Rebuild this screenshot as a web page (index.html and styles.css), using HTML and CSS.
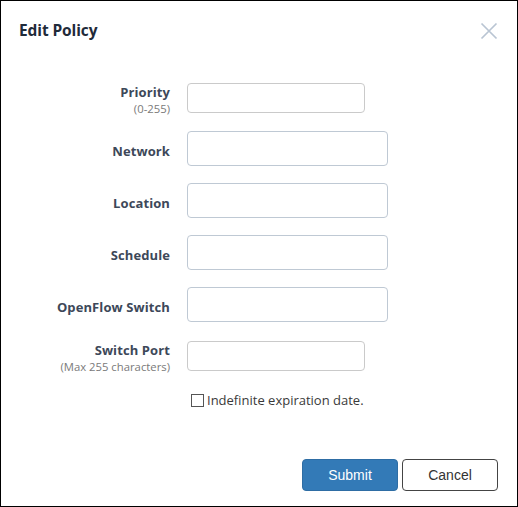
FILE: index.html
```html
<!DOCTYPE html>
<html lang="en">
<head>
  <meta charset="UTF-8">
  <meta name="viewport" content="width=device-width, initial-scale=1.0">
  <title>Edit Policy</title>
  <link rel="stylesheet" href="styles.css">
</head>
<body>
  <div class="modal">
    <div class="modal-header">
      <h2>Edit Policy</h2>
      <button class="close-btn" type="button" aria-label="Close">
        <svg width="18" height="18" viewBox="0 0 18 18">
          <path d="M1.5 1.5 L16.5 16.5 M16.5 1.5 L1.5 16.5" stroke="#b9c5d3" stroke-width="1.7" fill="none"/>
        </svg>
      </button>
    </div>

    <form class="policy-form">
      <div class="row">
        <label for="priority">Priority<span class="hint">(0-255)</span></label>
        <input id="priority" class="short plain" type="text">
      </div>
      <div class="row">
        <label for="network">Network</label>
        <input id="network" type="text">
      </div>
      <div class="row">
        <label for="location">Location</label>
        <input id="location" type="text">
      </div>
      <div class="row">
        <label for="schedule">Schedule</label>
        <input id="schedule" type="text">
      </div>
      <div class="row">
        <label for="switch">OpenFlow Switch</label>
        <input id="switch" type="text">
      </div>
      <div class="row">
        <label for="port">Switch Port<span class="hint">(Max 255 characters)</span></label>
        <input id="port" class="short plain" type="text">
      </div>
      <div class="check-row">
        <input id="indefinite" type="checkbox">
        <label for="indefinite">Indefinite expiration date.</label>
      </div>
    </form>

    <div class="modal-footer">
      <button class="btn btn-primary" type="button">Submit</button>
      <button class="btn btn-default" type="button">Cancel</button>
    </div>
  </div>
</body>
</html>
```

FILE: styles.css
```css
body {
  margin: 0;
  font-family: "Open Sans", "Noto Sans", Arial, sans-serif;
  background-color: #fff;
  color: #333;
}
.modal {
  width: 518px;
  height: 507px;
  box-sizing: border-box;
  border: 1px solid #000;
  display: flex;
  flex-direction: column;
  background-color: #fff;
}
.modal-header {
  display: flex;
  justify-content: space-between;
  align-items: flex-start;
  padding: 19px 18px 0 18px;
}
.modal-header h2 {
  margin: 0;
  font-size: 15.5px;
  line-height: 20px;
  font-weight: 700;
  color: #1f2b3a;
  letter-spacing: -0.1px;
}
.close-btn {
  border: none;
  background: none;
  padding: 0;
  margin: 2px 1px 0 0;
  width: 18px;
  height: 18px;
  cursor: pointer;
}
.close-btn svg {
  display: block;
}

/* form rows: label column on the left, field on the right */
.policy-form {
  margin-top: 41px;
}
.row {
  display: flex;
  align-items: center;
  margin-bottom: 17px;
}
.row:first-child {
  margin-bottom: 16px;
}
.row label {
  width: 169px;
  flex-shrink: 0;
  padding-top: 2px;
  margin-bottom: -2px; /* nudge text down without growing the row */
  text-align: right;
  font-size: 13px;
  line-height: 18px;
  font-weight: 700;
  color: #3d4859;
  letter-spacing: 0.1px;
}
.row .hint {
  display: block;
  font-size: 11.3px;
  line-height: 16px;
  font-weight: 400;
  color: #7a7a7a;
  letter-spacing: 0;
}
.row input {
  margin-left: 17px;
  width: 201px;
  height: 35px;
  box-sizing: border-box;
  border: 1px solid #bfc9d4;
  border-radius: 4px;
  padding: 4px 8px;
  font-size: 13px;
  font-family: inherit;
}
.row input.short {
  width: 178px;
  height: 30px;
}
.row input.plain {
  border-color: #cacaca;
}
.check-row {
  display: flex;
  align-items: center;
  padding-left: 190px;
  margin-top: 18px;
}
.check-row input {
  appearance: none;
  -webkit-appearance: none;
  width: 13px;
  height: 13px;
  margin: 0;
  border: 1px solid #555;
  background: #fff;
}
.check-row label {
  margin-left: 3px;
  font-size: 13px;
  line-height: 18px;
  color: #3a3a3a;
}

.modal-footer {
  margin-top: auto;
  display: flex;
  justify-content: flex-end;
  gap: 4px;
  padding: 0 19px 15px 0;
}
.btn {
  width: 96px;
  height: 32px;
  border-radius: 4px;
  font-family: "Liberation Sans", Arial, sans-serif;
  font-size: 14px;
  cursor: pointer;
}
.btn-primary {
  background-color: #337ab7;
  border: 1px solid #2e6da4;
  color: #fff;
}
.btn-default {
  background-color: #fff;
  border: 1px solid #444;
  color: #333;
}
```
